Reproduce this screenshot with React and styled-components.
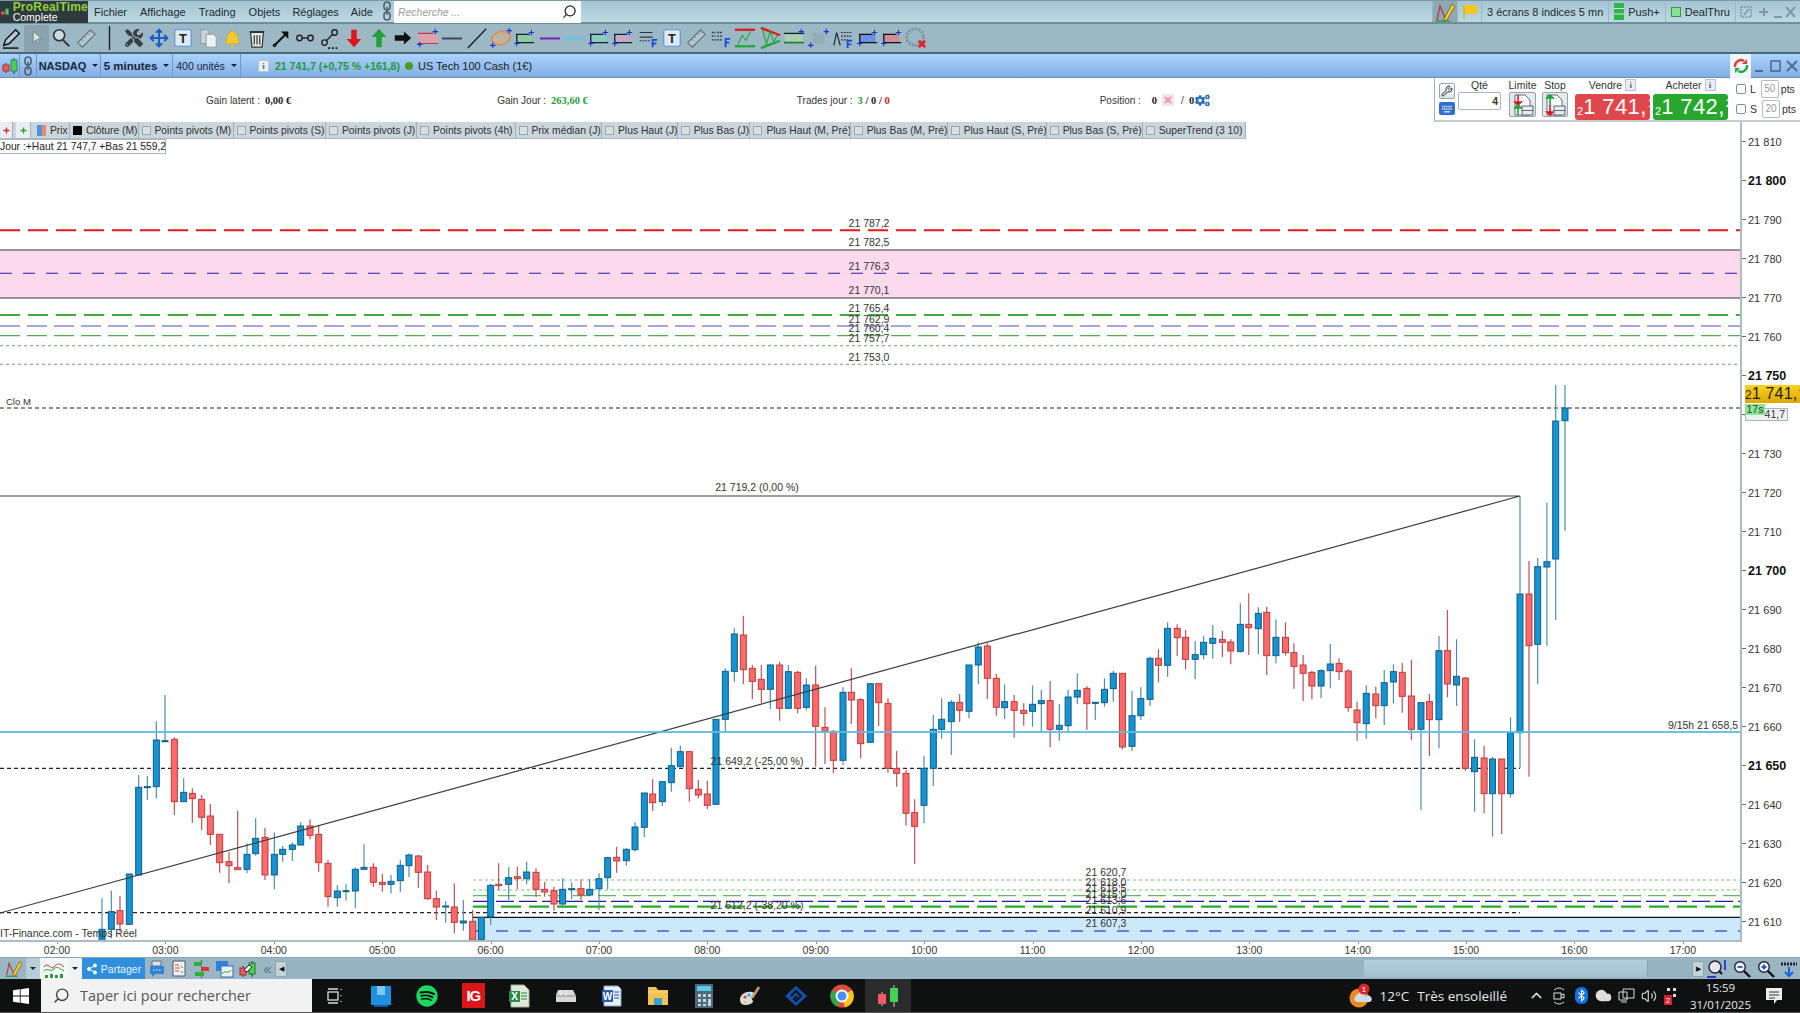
import React from 'react';
import styled, { createGlobalStyle } from 'styled-components';
import { FaTools, FaBell, FaSpotify, FaCogs, FaPlus } from 'react-icons/fa';
import { Move, Search, Wrench, ChevronUp, Bluetooth, Cloud, Volume2, Share2 } from 'lucide-react';

// candles as read off the picture: [x, wickTop, bodyTop, bodyBottom, wickBottom, up?]
// each block is read at its own scale and turned into page coordinates
const toPage = (ox, sx, oy, sy, rows) =>
  rows.map(([x, a, b, c, d, up]) => ({
    x: ox + x / sx,
    wt: oy + a / sy,
    bt: oy + b / sy,
    bb: oy + c / sy,
    wb: oy + d / sy,
    up: !!up,
  }));

const CANDLES = [
  ...toPage(0, 3, 680, 3, [
    [306, 655, 748, 800, 800, 1], [334, 632, 695, 748, 775, 1], [360, 648, 692, 732, 755, 0],
    [388, 582, 582, 733, 735, 1], [416, 285, 322, 585, 585, 1], [442, 288, 320, 323, 360, 1],
    [469, 124, 180, 320, 355, 1], [495, 45, 182, 184, 187, 1], [523, 172, 178, 365, 405, 0],
    [551, 295, 337, 365, 365, 1], [577, 325, 340, 356, 428, 0], [605, 345, 358, 412, 450, 0],
    [631, 372, 408, 463, 495, 0], [659, 463, 463, 548, 578, 0], [687, 515, 545, 557, 610, 0],
    [713, 392, 563, 569, 570, 0], [741, 490, 523, 568, 580, 1], [767, 415, 475, 521, 527, 1],
    [795, 443, 472, 585, 600, 0], [823, 457, 523, 585, 628, 1], [848, 497, 508, 523, 545, 1],
    [877, 487, 495, 508, 543, 1], [902, 427, 438, 495, 495, 1], [930, 418, 438, 466, 478, 0],
    [956, 437, 463, 548, 575, 0], [984, 540, 550, 650, 680, 0], [1012, 615, 633, 653, 680, 1],
    [1038, 613, 632, 633, 662, 1], [1066, 562, 568, 633, 685, 1], [1092, 493, 562, 568, 570, 1],
    [1120, 550, 562, 607, 620, 0], [1147, 582, 607, 613, 635, 0], [1173, 585, 604, 613, 640, 1],
    [1201, 540, 556, 602, 637, 1], [1227, 520, 525, 557, 592, 1], [1255, 525, 528, 577, 623, 0],
    [1283, 555, 576, 656, 660, 0], [1309, 632, 656, 681, 720, 0], [1337, 663, 678, 681, 728, 1],
    [1363, 610, 681, 727, 760, 0], [1390, 660, 723, 729, 752, 1], [1418, 690, 724, 780, 785, 0],
    [1444, 712, 712, 778, 785, 1], [1472, 612, 616, 710, 735, 1],
  ]),
  ...toPage(500, 3, 600, 3, [
    [-4, 790, 853, 857, 870, 0], [26, 802, 833, 853, 900, 1], [52, 800, 830, 836, 868, 0],
    [80, 785, 816, 836, 853, 1], [108, 805, 817, 868, 890, 0], [134, 845, 868, 876, 890, 0],
    [162, 860, 872, 912, 932, 0], [188, 835, 868, 912, 922, 1], [215, 847, 866, 868, 897, 1],
    [243, 838, 866, 885, 900, 0], [269, 837, 868, 885, 885, 1], [297, 820, 836, 866, 930, 1],
    [323, 770, 773, 833, 868, 1], [350, 740, 772, 783, 818, 0], [379, 745, 748, 782, 797, 1],
    [405, 667, 681, 749, 755, 1], [433, 579, 579, 682, 712, 1], [458, 538, 582, 608, 633, 0],
    [487, 545, 545, 605, 617, 1], [514, 443, 497, 548, 575, 1], [541, 437, 455, 500, 500, 1],
    [568, 453, 455, 566, 605, 0], [595, 540, 568, 585, 595, 0], [622, 542, 582, 616, 628, 0],
    [648, 358, 358, 613, 613, 1], [676, 205, 214, 358, 395, 1], [703, 85, 102, 214, 245, 1],
    [730, 47, 105, 209, 252, 0], [757, 195, 205, 244, 298, 0], [784, 195, 238, 268, 310, 0],
    [811, 192, 195, 268, 327, 1], [839, 185, 195, 325, 362, 0], [865, 195, 215, 325, 325, 1],
    [893, 212, 217, 325, 340, 0], [919, 235, 255, 322, 330, 1], [947, 197, 255, 379, 500, 0],
    [975, 322, 382, 394, 492, 0], [1000, 390, 394, 481, 520, 0], [1029, 262, 277, 481, 495, 1],
    [1054, 205, 277, 300, 372, 0], [1082, 295, 299, 431, 475, 0], [1111, 250, 251, 427, 427, 1],
    [1136, 248, 251, 308, 378, 0], [1164, 295, 310, 505, 518, 0], [1190, 452, 506, 520, 560, 0],
    [1218, 510, 520, 640, 677, 0], [1244, 598, 638, 679, 792, 0], [1272, 468, 505, 616, 670, 1],
    [1300, 345, 388, 505, 558, 1], [1325, 295, 358, 388, 416, 1], [1354, 300, 307, 365, 465, 1],
    [1379, 282, 307, 331, 365, 0], [1407, 195, 195, 334, 355, 1], [1435, 127, 141, 195, 253, 1],
    [1462, 130, 138, 235, 298, 0], [1489, 222, 235, 322, 347, 0],
  ]),
  ...toPage(1000, 2.613, 580, 3, [
    [12, 313, 365, 383, 417, 1], [37, 345, 365, 391, 473, 0], [62, 370, 391, 400, 437, 0],
    [85, 316, 373, 394, 440, 1], [108, 330, 362, 371, 455, 1], [131, 303, 362, 448, 502, 0],
    [155, 372, 436, 448, 482, 1], [178, 330, 351, 437, 455, 1], [202, 280, 331, 351, 372, 1],
    [227, 318, 325, 371, 450, 0], [249, 368, 367, 370, 420, 1], [273, 295, 328, 368, 380, 1],
    [296, 272, 280, 326, 365, 1], [320, 280, 280, 501, 508, 0], [345, 333, 407, 499, 513, 1],
    [368, 322, 356, 407, 420, 1], [392, 230, 235, 358, 378, 1], [414, 208, 235, 256, 307, 0],
    [438, 127, 145, 256, 290, 1], [463, 133, 145, 173, 228, 0], [485, 150, 172, 238, 268, 0],
    [510, 183, 224, 238, 298, 1], [532, 168, 187, 224, 238, 1], [556, 135, 175, 190, 236, 1],
    [581, 153, 179, 187, 231, 0], [603, 178, 186, 213, 253, 0], [628, 70, 133, 214, 218, 1],
    [650, 40, 133, 143, 225, 0], [675, 82, 100, 146, 222, 1], [697, 80, 97, 227, 285, 0],
    [721, 118, 172, 227, 250, 1], [746, 127, 172, 218, 227, 0], [768, 190, 218, 259, 326, 0],
    [792, 225, 255, 280, 363, 0], [815, 272, 277, 318, 358, 0], [839, 268, 272, 318, 355, 1],
    [863, 192, 252, 272, 325, 1], [886, 235, 250, 275, 300, 0], [910, 268, 273, 383, 395, 0],
    [933, 365, 390, 428, 482, 0], [957, 316, 340, 431, 476, 1], [982, 320, 342, 377, 415, 0],
    [1004, 270, 308, 377, 435, 1], [1028, 253, 275, 306, 370, 1], [1051, 248, 277, 349, 398, 0],
    [1075, 240, 348, 448, 480, 0], [1100, 368, 368, 448, 690, 1], [1122, 342, 365, 419, 528, 0],
    [1147, 168, 212, 419, 505, 1], [1169, 90, 212, 312, 352, 0], [1193, 178, 289, 315, 378, 1],
    [1216, 292, 294, 565, 572, 0], [1240, 478, 532, 575, 695, 1], [1265, 497, 534, 641, 700, 0],
    [1287, 530, 537, 641, 770, 1], [1311, 537, 537, 641, 762, 0], [1334, 412, 458, 641, 652, 1],
  ]),
  { x: 1520, wt: 496, bt: 594, bb: 732.7, wb: 768, up: true },
  { x: 1529, wt: 561, bt: 594, bb: 645.7, wb: 776.7, up: false },
  { x: 1537.7, wt: 558, bt: 566.7, bb: 644.3, wb: 684.3, up: true },
  { x: 1546.9, wt: 502.7, bt: 561.7, bb: 567, wb: 645.7, up: true },
  { x: 1555.7, wt: 385, bt: 421, bb: 559, wb: 620, up: true },
  { x: 1565, wt: 385, bt: 408, bb: 420.7, wb: 530.7, up: true },
];

const LEVELS = [
  { y: 230.3, from: 0, to: 1742, color: '#e8171f', w: 2, dash: '20 8' },
  { y: 273.3, from: 0, to: 1742, color: '#2020a8', w: 1.1, dash: '12 11' },
  { y: 315, from: 0, to: 1742, color: '#3eaa3e', w: 2, dash: '20 8' },
  { y: 326, from: 0, to: 1742, color: '#4c4cb4', w: 1.2, dash: '20 7' },
  { y: 335.7, from: 0, to: 1742, color: '#58a858', w: 1.2, dash: '20 7' },
  { y: 345.7, from: 0, to: 1742, color: '#86b886', w: 1.2, dash: '3 3' },
  { y: 364.3, from: 0, to: 1742, color: '#86b886', w: 1.2, dash: '3 3' },
  { y: 408, from: 0, to: 1742, color: '#222', w: 1.2, dash: '4 3' },
  { y: 768.3, from: 0, to: 1520, color: '#222', w: 1.2, dash: '4 3' },
  { y: 912.7, from: 0, to: 1520, color: '#222', w: 1.2, dash: '4 3' },
  { y: 880, from: 473, to: 1742, color: '#78bd78', w: 1.1, dash: '3 3' },
  { y: 890, from: 473, to: 1742, color: '#78bd78', w: 1.1, dash: '3 3' },
  { y: 895.7, from: 473, to: 1742, color: '#62b562', w: 1.2, dash: '18 7' },
  { y: 901.3, from: 473, to: 1742, color: '#1c1ca6', w: 1.2, dash: '18 5' },
  { y: 906.7, from: 473, to: 1742, color: '#28aa28', w: 2.2, dash: '20 8' },
  { y: 931, from: 473, to: 1742, color: '#1414a8', w: 1.1, dash: '12 11' },
];

const NOTES = [
  [869, 223, '21 787,2'], [869, 242, '21 782,5'], [869, 265.7, '21 776,3'], [869, 290, '21 770,1'],
  [869, 308, '21 765,4'], [869, 319, '21 762,9'], [869, 328, '21 760,4'], [869, 338, '21 757,7'],
  [869, 357, '21 753,0'], [757, 487, '21 719,2 (0,00 %)'], [757, 761, '21 649,2 (-25,00 %)'],
  [757, 905, '21 612,2 (-38,20 %)'], [1106, 872, '21 620,7'], [1106, 882, '21 618,0'],
  [1106, 888, '21 616,5'], [1106, 894, '21 615,0'], [1106, 900, '21 613,6'], [1106, 910, '21 610,9'],
  [1106, 923, '21 607,3'],
];

const LEGEND = [
  ['Points pivots (M)', 95], ['Points pivots (S)', 92.5], ['Points pivots (J)', 91], ['Points pivots (4h)', 98.5],
  ['Prix médian (J)', 86.5], ['Plus Haut (J)', 75.7], ['Plus Bas (J)', 72.7], ['Plus Haut (M, Pré)', 100.3],
  ['Plus Bas (M, Pré)', 97], ['Plus Haut (S, Pré)', 99], ['Plus Bas (S, Pré)', 96], ['SuperTrend (3 10)', 103.4],
];

const PRICES = Array.from({ length: 21 }, (_, i) => 21810 - i * 10);
const HOURS = ['02:00', '03:00', '04:00', '05:00', '06:00', '07:00', '08:00', '09:00', '10:00', '11:00', '12:00', '13:00', '14:00', '15:00', '16:00', '17:00'];

const GlobalStyle = createGlobalStyle`
  * { box-sizing: border-box; }
  html, body { margin: 0; padding: 0; overflow: hidden; background: #fff; }
  body { font-family: "Liberation Sans", Arial, sans-serif; color: #222; }
`;

const Page = styled.div`
  width: 1800px;
  height: 1013px;
  display: flex;
  flex-direction: column;
  overflow: hidden;
`;

const MenuBar = styled.div`
  height: 24px;
  display: flex;
  align-items: center;
  background: linear-gradient(#a4c5d3, #bdd8e2);
  border-top: 1px solid #7b9aa8;
  border-bottom: 2px solid #6f8e9b;
  font-size: 11px;
`;

const Logo = styled.div`
  width: 88px;
  height: 22px;
  display: flex;
  align-items: center;
  gap: 3px;
  background: #2f3a3d;
  color: #fff;
  line-height: 10px;
`;

const LogoText = styled.div`
  font-size: 10.5px;
  b {
    display: block;
    color: #8fcf3a;
    font-size: 12px;
    letter-spacing: 0.2px;
  }
`;

const MenuItem = styled.span`
  margin-left: ${(p) => p.$gap}px;
  color: #1e2a30;
`;

const SearchBox = styled.div`
  width: 187px;
  height: 22px;
  margin-left: 1px;
  padding: 0 4px;
  display: flex;
  align-items: center;
  justify-content: space-between;
  background: #fff;
  font-style: italic;
  font-size: 10.5px;
  color: #9a9a9a;
`;

const MenuRight = styled.div`
  margin-left: auto;
  height: 100%;
  display: flex;
  align-items: center;
`;

const RightCell = styled.div`
  height: 100%;
  padding: ${(p) => p.$pad || '0 5px'};
  display: flex;
  align-items: center;
  gap: 4px;
  border-left: 1px solid #9db8c4;
  background: ${(p) => p.$dark ? '#8fa9b4' : 'transparent'};
  color: #1e2a30;
`;

const ToolBar = styled.div`
  height: 30px;
  display: flex;
  align-items: center;
  background: #9cb8c5;
  border-bottom: 2px solid #47697c;
`;

const ToolSlot = styled.div`
  width: 24.45px;
  height: 27px;
  flex: none;
  display: flex;
  align-items: center;
  justify-content: center;
  background: ${(p) => p.$active ? '#8aa3ae' : 'transparent'};
  border-radius: 2px;
`;

const SymbolBar = styled.div`
  height: 24px;
  display: flex;
  align-items: center;
  background: linear-gradient(#abd2fc, #83aee2);
  border-bottom: 1px solid #6c8fb8;
  font-size: 11px;
`;

const SymbolCell = styled.div`
  height: 100%;
  width: ${(p) => p.$w}px;
  flex: none;
  display: flex;
  align-items: center;
  justify-content: center;
  gap: 6px;
  border-right: 1px solid #6f97c8;
  font-weight: ${(p) => p.$bold ? 700 : 400};
  font-size: ${(p) => p.$size || 11}px;
  color: #17263a;
`;

const Caret = styled.i`
  width: 0;
  height: 0;
  border: 3px solid transparent;
  border-top: 3.5px solid #17263a;
  border-bottom: 0;
`;

const InfoSquare = styled.span`
  width: 11px;
  height: 12px;
  margin-left: 6px;
  background: #e9eef3;
  border: 1px solid #b7c2cc;
  font: 700 9px "Liberation Serif", serif;
  color: #667;
  display: flex;
  align-items: center;
  justify-content: center;
`;

const Quote = styled.span`
  margin-left: 6px;
  color: #1e9b3c;
  font-weight: 700;
  font-size: 10.5px;
`;

const GreenDot = styled.i`
  width: 8px;
  height: 8px;
  margin: 0 5px;
  border-radius: 50%;
  background: #4a9e24;
`;

const WindowButtons = styled.div`
  margin-left: auto;
  height: 100%;
  display: flex;
  align-items: center;
`;

const RefreshTab = styled.div`
  width: 21px;
  height: 24px;
  background: #eef5fd;
  display: flex;
  align-items: center;
  justify-content: center;
`;

const InfoBar = styled.div`
  height: 44px;
  display: flex;
  background: #fff;
  font-size: 10px;
  color: #333;
`;

const Stats = styled.div`
  flex: 1;
  display: flex;
  align-items: center;
`;

const Stat = styled.div`
  margin-left: ${(p) => p.$gap}px;
  display: flex;
  align-items: center;
  gap: 5px;
  white-space: nowrap;
`;

const Figure = styled.b`
  font: 700 10.5px "Liberation Serif", serif;
  color: ${(p) => p.$color || '#222'};
`;

const OrderPanel = styled.div`
  width: 366px;
  flex: none;
  display: flex;
  padding-left: 4px;
  border-left: 1px solid #9fb0bb;
  border-bottom: 2px solid #c3cdd3;
  font-size: 10.5px;
`;

const ToolsColumn = styled.div`
  width: 16px;
  padding-top: 5px;
  display: flex;
  flex-direction: column;
  gap: 3px;
`;

const SquareBtn = styled.div`
  width: 16px;
  height: 16px;
  border: 1px solid #99a5ad;
  border-radius: 2px;
  background: linear-gradient(#fff, #dde3e7);
  display: flex;
  align-items: center;
  justify-content: center;
`;

const KeyPad = styled.div`
  width: 16px;
  height: 13px;
  border-radius: 2px;
  background: #2f6fd0;
  display: flex;
  align-items: center;
  justify-content: center;
`;

const OrderColumn = styled.div`
  width: ${(p) => p.$w}px;
  margin-left: ${(p) => p.$gap}px;
  flex: none;
  display: flex;
  flex-direction: column;
  align-items: center;
  text-align: center;
`;

const OrderLabel = styled.div`
  height: 14px;
  display: flex;
  align-items: center;
  gap: 3px;
  color: #333;
  white-space: nowrap;
`;

const QtyInput = styled.div`
  width: 100%;
  height: 18px;
  border: 1px solid #a9b4bb;
  border-radius: 2px;
  padding-right: 2px;
  text-align: right;
  line-height: 16px;
  font-weight: 700;
  font-size: 10.5px;
`;

const PageBtn = styled.div`
  width: 100%;
  height: 25px;
  border: 1px solid #98a4ab;
  border-radius: 2px;
  background: #e4e9ec;
  display: flex;
  align-items: center;
  justify-content: center;
`;

const PriceBtn = styled.div`
  width: 75px;
  height: 26px;
  margin-top: 2px;
  padding-left: 2px;
  border-radius: 3px;
  background: ${(p) => p.$color};
  color: #fff;
  display: flex;
  align-items: center;
  font-size: 22px;
  white-space: nowrap;
  overflow: hidden;
  letter-spacing: 0.4px;
`;

const Small = styled.small`
  font-size: ${(p) => p.$size || 11}px;
  align-self: ${(p) => p.$top ? 'flex-start' : 'flex-end'};
  margin: ${(p) => p.$top ? '3px 0 0 1px' : '0 0 3px 0'};
  letter-spacing: 0;
`;

const RiskColumn = styled.div`
  width: 62px;
  margin-left: 6px;
  display: flex;
  flex-direction: column;
  gap: 2px;
  padding-top: 2px;
`;

const RiskRow = styled.div`
  display: flex;
  align-items: center;
  height: 18px;
  font-size: 10.5px;
`;

const CheckBox = styled.span`
  width: 10px;
  height: 10px;
  margin-left: 2px;
  margin-right: 4px;
  border: 1px solid #7f8d96;
  border-radius: 2px;
  background: #fff;
`;

const PtsInput = styled.span`
  width: 18px;
  height: 18px;
  margin: 0 2px 0 5px;
  border: 1px solid #b3bcc2;
  border-radius: 2px;
  color: #999;
  font-size: 10px;
  text-align: center;
  line-height: 16px;
`;

const ChartRow = styled.div`
  height: 820px;
  display: flex;
`;

const Plot = styled.div`
  width: 1742px;
  position: relative;
  border-right: 2px solid #aebcc4;
  border-bottom: 2px solid #aebcc4;
  overflow: hidden;
`;

const ChartSvg = styled.svg`
  display: block;
`;

const Note = styled.text`
  font: 10.5px "Liberation Sans", Arial, sans-serif;
  fill: #333;
  text-anchor: ${(p) => p.$anchor || 'middle'};
  dominant-baseline: central;
`;

const LegendBar = styled.div`
  position: absolute;
  left: 0;
  top: 0;
  height: 17px;
  display: flex;
  background: #cad5dc;
  font-size: 10.3px;
  color: #333;
  border-bottom: 1px solid #aab8c0;
`;

const LegendCell = styled.div`
  width: ${(p) => p.$w}px;
  flex: none;
  display: flex;
  align-items: center;
  gap: 4px;
  padding-left: 3px;
  border-right: 1px solid #9fb0ba;
  white-space: nowrap;
  overflow: hidden;
`;

const LegendCheck = styled.i`
  width: 9px;
  height: 9px;
  flex: none;
  background: ${(p) => p.$fill || '#d9e0e4'};
  border: 1px solid ${(p) => p.$fill ? p.$fill : '#9aa8b0'};
`;

const MiniBtn = styled.div`
  width: ${(p) => p.$w}px;
  flex: none;
  display: flex;
  align-items: center;
  justify-content: center;
  background: #e8edf0;
  border-right: 1px solid #9fb0ba;
  margin-right: ${(p) => p.$gap || 0}px;
`;

const DayRange = styled.div`
  position: absolute;
  left: 0;
  top: 17px;
  width: 166px;
  height: 15px;
  background: #fff;
  border: 1px solid #a9b7bf;
  border-left: 0;
  font-size: 10.3px;
  line-height: 13px;
  white-space: nowrap;
  color: #222;
`;

const Watermark = styled.div`
  position: absolute;
  left: 0;
  bottom: 0;
  font-size: 10.5px;
  line-height: 13px;
  color: #333;
`;

const PriceAxis = styled.div`
  width: 58px;
  position: relative;
  display: flex;
  flex-direction: column;
  overflow: hidden;
`;

const PriceTick = styled.div`
  height: 39px;
  flex: none;
  display: flex;
  align-items: center;
  gap: 2px;
  font-size: ${(p) => p.$major ? 12.5 : 11}px;
  font-weight: ${(p) => p.$major ? 700 : 400};
  color: ${(p) => p.$major ? '#111' : '#333'};
  &::before {
    content: '';
    width: 4px;
    height: 1px;
    background: #667;
  }
`;

const LastPrice = styled.div`
  position: absolute;
  left: 3px;
  right: 0;
  top: 263px;
  height: 18px;
  display: flex;
  align-items: center;
  overflow: hidden;
  background: linear-gradient(#f8d321, #dca700);
  font-size: 16px;
  color: #222;
  white-space: nowrap;
  letter-spacing: 0.2px;
`;

const CloseBox = styled.div`
  position: absolute;
  left: 3px;
  top: 286px;
  width: 43px;
  height: 13px;
  padding-right: 2px;
  text-align: right;
  background: #edf1f4;
  border: 1px solid #a9b4bb;
  font-size: 10.5px;
  line-height: 11px;
  color: #333;
`;

const Countdown = styled.div`
  position: absolute;
  left: 3px;
  top: 282px;
  width: 20px;
  height: 11px;
  background: #8fe28f;
  font-size: 10.5px;
  line-height: 11px;
  text-align: center;
  color: #245;
`;

const TimeAxis = styled.div`
  height: 15px;
  display: flex;
  padding-left: 2.8px;
  background: #fff;
  font-size: 10.5px;
  color: #333;
`;

const TimeTick = styled.div`
  width: 108.4px;
  flex: none;
  text-align: center;
  line-height: 17px;
  position: relative;
  &::before {
    content: '';
    position: absolute;
    left: 50%;
    top: 0;
    width: 1px;
    height: 2px;
    background: #889;
  }
`;

const BottomBar = styled.div`
  height: 22px;
  display: flex;
  align-items: center;
  background: #9ab6c4;
  border-top: 1px solid #8ba7b4;
`;

const BottomCell = styled.div`
  width: ${(p) => p.$w}px;
  height: 100%;
  flex: none;
  display: flex;
  align-items: center;
  justify-content: center;
  background: ${(p) => p.$bg || 'transparent'};
`;

const ShareBtn = styled.div`
  width: 63px;
  height: 100%;
  flex: none;
  display: flex;
  align-items: center;
  justify-content: center;
  gap: 3px;
  background: #2f8fdc;
  color: #e8f4ff;
  font-size: 10.5px;
`;

const ScrollEnd = styled.div`
  width: 12px;
  height: 16px;
  flex: none;
  background: #c4d3da;
  border: 1px solid #8ca4b0;
  border-radius: 2px;
  display: flex;
  align-items: center;
  justify-content: center;
  font-size: 7px;
  color: #111;
`;

const ScrollTrack = styled.div`
  flex: 1;
  height: 17px;
  padding-left: 1077px;
  background: #96b3c1;
`;

const ScrollThumb = styled.div`
  width: 284px;
  height: 100%;
  background: linear-gradient(#b3d0dc, #a3c2d0);
  border-right: 1px solid #87a4b2;
`;

const TaskBar = styled.div`
  height: 34px;
  display: flex;
  align-items: center;
  background: #0f1111;
  border-bottom: 1px solid #555;
  color: #e8e8e8;
`;

const StartBtn = styled.div`
  width: 41px;
  height: 100%;
  display: flex;
  align-items: center;
  justify-content: center;
`;

const TaskSearch = styled.div`
  width: 271px;
  height: 100%;
  padding-left: 12px;
  display: flex;
  align-items: center;
  gap: 10px;
  background: #f2f2f2;
  color: #555;
  font: 14.5px "Open Sans", sans-serif;
`;

const TaskIcons = styled.div`
  margin-left: 0;
  display: flex;
  align-items: center;
  height: 100%;
`;

const TaskIcon = styled.div`
  width: 46.1px;
  height: 100%;
  flex: none;
  display: flex;
  align-items: center;
  justify-content: center;
  background: ${(p) => p.$active ? '#2a2c2c' : 'transparent'};
`;

const IgBadge = styled.div`
  width: 23px;
  height: 25px;
  background: #d8161c;
  color: #fff;
  font: 700 15px "Liberation Sans", sans-serif;
  display: flex;
  align-items: center;
  justify-content: center;
  letter-spacing: -1px;
`;

const Tray = styled.div`
  margin-left: auto;
  height: 100%;
  display: flex;
  align-items: center;
  font: 13.5px "Open Sans", sans-serif;
`;

const TrayText = styled.span`
  margin-left: ${(p) => p.$gap}px;
  white-space: nowrap;
`;

const TrayIcon = styled.span`
  width: 22.5px;
  flex: none;
  display: flex;
  justify-content: center;
`;

const Clock = styled.div`
  width: 64px;
  margin-left: 6px;
  text-align: center;
  font-size: 11.5px;
  line-height: 17px;
`;

const Plus = ({ x, y, c = '#1636d4' }) => <path d={`M${x - 3} ${y}h6M${x} ${y - 3}v6`} stroke={c} fill="none" strokeWidth="1.2" />;

const Ico = ({ size = 22, children }) => (
  <svg width={size} height={size} viewBox="0 0 24 24" fill="none">{children}</svg>
);

const boxTool = (fill, stroke = '#123') => (
  <Ico>
    <rect x="3" y="8" width="17" height="9" fill={fill} />
    <path d="M2 8h15M2 17h20M3 8v9" stroke={stroke} strokeWidth="1.4" />
    <Plus x={19} y={6} /><Plus x={3} y={18} />
  </Ico>
);

const fibTool = (
  <Ico>
    <path d="M3 6h14M3 11h14" stroke="#334" strokeWidth="1.2" />
    <path d="M3 15h12" stroke="#334" strokeWidth="1.2" strokeDasharray="2 1" />
    <path d="M17 22v-8h5M17 18h4" stroke="#1650d8" strokeWidth="2" />
  </Ico>
);

const textTool = (
  <Ico>
    <rect x="3" y="3" width="18" height="18" rx="2" fill="#dde9f4" stroke="#5e93d8" strokeWidth="1.3" />
    <text x="12" y="17" textAnchor="middle" fontSize="14" fontWeight="700" fontFamily="Liberation Sans" fill="#222">T</text>
  </Ico>
);

const rulerTool = (
  <Ico>
    <path d="M3 17 17 3l5 5L8 22z" fill="#b3c7d0" stroke="#5b6c74" strokeWidth="1.1" />
    <path d="M7 13l2 2M10 10l2 2M13 7l2 2M16 4.5l2 2" stroke="#5b6c74" />
  </Ico>
);

const TOOLS = [
  <Ico key="pencil"><path d="M3 20 5 14 16 3l4 4L9 18z" fill="#b9ccd4" stroke="#111" strokeWidth="1.6" /><path d="M2 23h17" stroke="#111" strokeWidth="1.6" /></Ico>,
  <Ico key="cursor" size={18}><path d="M7 3v15l4-4 3 6 2-1-3-6h5z" fill="#dfe6ea" stroke="#66757d" /></Ico>,
  <Ico key="lens"><circle cx="10" cy="9" r="6" stroke="#333" strokeWidth="1.7" fill="#c9dae2" /><path d="m14 14 7 7" stroke="#333" strokeWidth="2" /></Ico>,
  rulerTool,
  <svg key="sep" width="3" height="24"><path d="M1.5 0v24" stroke="#222" strokeWidth="1.4" /></svg>,
  <FaTools key="tools" size={18} color="#3a3f44" />,
  <Move key="move" size={20} color="#1b5fc6" strokeWidth={2.4} />,
  textTool,
  <Ico key="copy"><path d="M4 3h9v15H4z" fill="#c6d3d9" stroke="#8e9aa0" /><path d="M10 8h8l3 3v11H10z" fill="#eef2f4" stroke="#8e9aa0" /></Ico>,
  <FaBell key="bell" size={17} color="#f2c92a" style={{ filter: 'drop-shadow(0 0 0.5px #555)' }} />,
  <Ico key="trash"><path d="M5 6h14l-1.5 16h-11z" fill="#e5e8ea" stroke="#333" strokeWidth="1.3" /><path d="M4 5h16M9 9v10M12 9v10M15 9v10" stroke="#333" strokeWidth="1.3" /></Ico>,
  <Ico key="arrow"><path d="M5 20 18 7" stroke="#111" strokeWidth="2.2" /><path d="M12 5h8v8z" fill="#111" /><circle cx="5" cy="20" r="2" fill="#111" /></Ico>,
  <Ico key="dots"><circle cx="6" cy="12" r="3" stroke="#222" strokeWidth="1.5" /><circle cx="18" cy="12" r="3" stroke="#222" strokeWidth="1.5" /><path d="M9 12h6" stroke="#222" strokeWidth="1.5" /></Ico>,
  <Ico key="dots2"><circle cx="6" cy="17" r="3" stroke="#222" strokeWidth="1.5" /><circle cx="17" cy="6" r="3" stroke="#222" strokeWidth="1.5" /><path d="M8 15 15 8" stroke="#222" strokeWidth="1.5" /><path d="M10 23h12" stroke="#111" strokeWidth="2" strokeDasharray="2 2" /></Ico>,
  <Ico key="down"><path d="M9 3h6v10h5l-8 9-8-9h5z" fill="#e0141c" /></Ico>,
  <Ico key="up"><path d="M12 2l8 9h-5v11H9V11H4z" fill="#22a03a" /></Ico>,
  <Ico key="right"><path d="M3 9h10V5l8 7-8 7v-4H3z" fill="#111" /></Ico>,
  <Ico key="band"><rect x="1" y="7" width="22" height="11" fill="#d7a3ad" /><path d="M1 7h17M1 18h22" stroke="#c23a4a" strokeWidth="1.2" /><Plus x={20} y={5} /><Plus x={3} y={19} /></Ico>,
  <svg key="gray" width="24" height="3"><path d="M2 1.5h20" stroke="#445" strokeWidth="2" /></svg>,
  <Ico key="diag"><path d="M2 23 22 2" stroke="#223" strokeWidth="1.6" /></Ico>,
  <Ico key="ellipse"><ellipse cx="12" cy="12" rx="10" ry="7" transform="rotate(-15 12 12)" fill="#c2b39e" stroke="#d98c5a" strokeWidth="1.8" /><Plus x={21} y={4} /><Plus x={3} y={20} /></Ico>,
  boxTool('#8fc9a0'),
  <svg key="purple" width="24" height="3"><path d="M2 1.5h20" stroke="#7a1fb0" strokeWidth="2" /></svg>,
  <svg key="cyan" width="24" height="3"><path d="M2 1.5h20" stroke="#54c8ee" strokeWidth="2" /></svg>,
  boxTool('#8ccbc0'),
  boxTool('#c2a9c4'),
  fibTool,
  textTool,
  rulerTool,
  <Ico key="fibtext"><path d="M2 6h4M8 6h5M2 10h4M8 10h5M2 14h11" stroke="#334" strokeWidth="1.4" strokeDasharray="2 1" /><path d="M17 22v-9h5M17 17h4" stroke="#1650d8" strokeWidth="2" /></Ico>,
  <Ico key="zig"><path d="M1 3h22" stroke="#d42020" strokeWidth="2.5" /><path d="M1 21h22" stroke="#20a83a" strokeWidth="2.5" /><path d="M4 19 9 9l4 6 5-10" stroke="#20a83a" strokeWidth="1.2" /></Ico>,
  <Ico key="tri"><path d="M2 1 23 9" stroke="#d42020" strokeWidth="2.6" /><path d="M2 23 23 15" stroke="#20a83a" strokeWidth="2.6" /><path d="M4 3 8 19 12 5 16 16 20 9" stroke="#20a83a" strokeWidth="1.2" /></Ico>,
  <Ico key="green"><rect x="2" y="8" width="20" height="9" fill="#a8cfae" /><path d="M1 7h22" stroke="#123" strokeWidth="1.4" /><path d="M1 17h22" stroke="#17802d" strokeWidth="1.8" /><Plus x={20} y={5} /></Ico>,
  <Ico key="fade"><rect x="5" y="7" width="13" height="11" fill="#93acb8" /><Plus x={20} y={5} /><Plus x={3} y={20} /></Ico>,
  <Ico key="fibfan"><path d="M5 6 2 20M5 6l4 14" stroke="#123" strokeWidth="1.2" /><path d="M10 6h11M10 10h11M10 14h7" stroke="#334" strokeWidth="1.3" strokeDasharray="2 1" /><path d="M17 23v-8h5M17 19h4" stroke="#1650d8" strokeWidth="2" /></Ico>,
  boxTool('#6f8fe0', '#111'),
  boxTool('#cc8f98', '#111'),
  <Ico key="gear"><circle cx="11" cy="11" r="9" stroke="#7f959f" strokeWidth="3.4" strokeDasharray="2.4 1.4" /><path d="M15 15l7 7M22 15l-7 7" stroke="#e0242c" strokeWidth="3" /></Ico>,
];

const CandleMark = ({ size = 18 }) => (
  <svg width={size} height={size} viewBox="0 0 18 18">
    <path d="M5 6v10M13 1v16" stroke="#333" />
    <rect x="2" y="8" width="6" height="6" fill="#ef5a5a" stroke="#a33" />
    <rect x="10" y="3" width="6" height="11" fill="#4ed04e" stroke="#287" />
  </svg>
);

const ChainMark = () => (
  <svg width="12" height="20" viewBox="0 0 12 20" fill="none" stroke="#50626c" strokeWidth="1.6">
    <rect x="3" y="1" width="6" height="8" rx="3" />
    <rect x="3" y="11" width="6" height="8" rx="3" />
    <path d="M6 6v8" />
  </svg>
);

const MarkerMark = ({ size = 22 }) => (
  <svg width={size} height={size} viewBox="0 0 22 22" fill="none">
    <path d="M2 20h14" stroke="#2aa03a" strokeWidth="1.4" />
    <path d="M3 19 6 5l5 12" stroke="#b33" strokeWidth="1.2" />
    <path d="M10 18 18 3l3 2-8 14-3 1z" fill="#f2cb3a" stroke="#6c5a16" strokeWidth="0.8" />
  </svg>
);

const OrderIcon = ({ flip }) => (
  <svg width="22" height="22" viewBox="0 0 22 22">
    <path d="M3 1h10l5 5v15H3z" fill="#fff" stroke="#667" />
    <path d="M6 1v7H3l3 3 0 0 3-3H6" fill={flip ? '#1aa538' : '#e0141c'} transform={flip ? 'rotate(180 6 6)' : ''} stroke={flip ? '#1aa538' : '#e0141c'} strokeWidth="1.6" />
    <path d="M6 21v-7H3l3-3 3 3H6" fill={flip ? '#e0141c' : '#1aa538'} transform={flip ? 'rotate(180 6 16)' : ''} stroke={flip ? '#e0141c' : '#1aa538'} strokeWidth="1.6" />
    <rect x="10" y="12" width="11" height="4.5" fill="#e6ebee" stroke="#667" />
    <rect x="10" y="16.5" width="11" height="4.5" fill="#e6ebee" stroke="#667" />
  </svg>
);

const LensMark = ({ sign }) => (
  <svg width="18" height="18" viewBox="0 0 18 18" fill="none">
    <circle cx="7" cy="7" r="5.3" fill="#eef3f6" stroke="#223" strokeWidth="1.4" />
    <path d="m11 11 6 6" stroke="#111" strokeWidth="2.4" />
    {sign !== 'full' && <path d="M4.5 7h5" stroke="#1d50c8" strokeWidth="1.8" />}
    {sign === '+' && <path d="M7 4.5v5" stroke="#1d50c8" strokeWidth="1.8" />}
  </svg>
);

const Chart = () => (
  <ChartSvg width="1740" height="818" viewBox="0 122 1740 818">
    <rect x="0" y="250" width="1740" height="48" fill="#fdd9ee" />
    <path d="M0 250h1740M0 298h1740" stroke="#777" strokeWidth="1.4" />
    <rect x="473" y="917" width="1267" height="24" fill="#cbe9fb" />
    <path d="M473 917.3h1267" stroke="#111" strokeWidth="1.3" />

    {LEVELS.map((l) => (
      <line key={l.y} x1={l.from} x2={l.to} y1={l.y} y2={l.y} stroke={l.color} strokeWidth={l.w} strokeDasharray={l.dash} />
    ))}

    {CANDLES.map((c) => (
      <g key={c.x}>
        <line x1={c.x} x2={c.x} y1={c.wt} y2={c.wb} stroke={c.up ? '#4e8ea9' : '#b8545a'} strokeWidth="1.2" />
        <rect
          x={c.x - 3}
          y={c.bt}
          width="6"
          height={Math.max(c.bb - c.bt, 1)}
          fill={c.up ? '#1593d2' : '#fa6a6a'}
          stroke={c.up ? '#0f5f88' : '#bd3c3c'}
          strokeWidth="1"
        />
      </g>
    ))}

    <path d="M0 913 1520 496H0" stroke="#3c3c3c" strokeWidth="1.2" fill="none" />
    <line x1="0" x2="1740" y1="732" y2="732" stroke="#5cbce4" strokeWidth="2.2" opacity="0.9" />

    {NOTES.map(([x, y, t]) => (
      <Note key={t} x={x} y={y}>{t}</Note>
    ))}
    <Note x="6" y="401.5" $anchor="start" style={{ fontSize: 9.5 }}>Clo M</Note>
    <Note x="1738" y="724.6" $anchor="end">9/15h 21 658,5</Note>
  </ChartSvg>
);

const App = () => (
  <Page>
    <GlobalStyle />

    <MenuBar>
      <Logo>
        <CandleMark />
        <LogoText><b>ProRealTime</b>Complete</LogoText>
      </Logo>
      <MenuItem $gap={6}>Fichier</MenuItem>
      <MenuItem $gap={13}>Affichage</MenuItem>
      <MenuItem $gap={13}>Trading</MenuItem>
      <MenuItem $gap={13}>Objets</MenuItem>
      <MenuItem $gap={12}>Réglages</MenuItem>
      <MenuItem $gap={12}>Aide</MenuItem>
      <MenuItem $gap={8}><ChainMark /></MenuItem>
      <SearchBox>
        Recherche ...
        <Search size={15} color="#222" style={{ transform: 'scaleX(-1)' }} />
      </SearchBox>
      <MenuRight>
        <RightCell $dark $pad="0 1px"><MarkerMark /></RightCell>
        <RightCell $pad="0 3px">
          <svg width="17" height="17" viewBox="0 0 17 17"><path d="M3 2h13v9H3z" fill="#f6c81e" /><path d="M3 2v14" stroke="#d8a80c" /></svg>
        </RightCell>
        <RightCell>3 écrans 8 indices 5 mn</RightCell>
        <RightCell>
          <svg width="10" height="17"><rect width="10" height="17" fill="#2fb54a" /><path d="M0 5.5h10M0 11h10" stroke="#c8ead0" /></svg>
          Push+
        </RightCell>
        <RightCell>
          <svg width="10" height="10"><rect x=".5" y=".5" width="9" height="9" fill="#8ade95" stroke="#2f9b44" /></svg>
          DealThru
        </RightCell>
        <RightCell $pad="0 4px">
          <svg width="56" height="16" viewBox="0 0 56 16" fill="none" stroke="#8198a4" strokeWidth="1.6">
            <rect x="1" y="3" width="10" height="10" strokeDasharray="2 1" />
            <path d="M4 11 9 5" />
            <path d="M19 8h9M24 4v8" strokeWidth="2" />
            <path d="M34 13h8" strokeWidth="2" />
            <path d="M46 3l9 10M55 3l-9 10" strokeWidth="2" />
          </svg>
        </RightCell>
      </MenuRight>
    </MenuBar>

    <ToolBar>
      {TOOLS.map((tool, i) => (
        <ToolSlot key={i} $active={i === 1}>{tool}</ToolSlot>
      ))}
    </ToolBar>

    <SymbolBar>
      <SymbolCell $w={20}><CandleMark /></SymbolCell>
      <SymbolCell $w={17}><ChainMark /></SymbolCell>
      <SymbolCell $w={64} $bold>NASDAQ <Caret /></SymbolCell>
      <SymbolCell $w={72} $bold $size={11.5}>5 minutes <Caret /></SymbolCell>
      <SymbolCell $w={68} $size={10.5}>400 unités <Caret /></SymbolCell>
      <InfoSquare style={{ marginLeft: 69 - 52 }}>i</InfoSquare>
      <Quote>21 741,7 (+0,75 % +161,8)</Quote>
      <GreenDot />
      <span>US Tech 100 Cash (1€)</span>
      <WindowButtons>
        <RefreshTab>
          <svg width="18" height="18" viewBox="0 0 18 18" fill="none" strokeWidth="2.4">
            <path d="M3 10a6 6 0 0 1 9-6" stroke="#e23b3b" /><path d="M15 2v5h-5z" fill="#e23b3b" />
            <path d="M15 8a6 6 0 0 1-9 6" stroke="#2aa83f" /><path d="M3 16v-5h5z" fill="#2aa83f" />
          </svg>
        </RefreshTab>
        <svg width="49" height="16" viewBox="0 0 49 16" fill="none" stroke="#4d6f90" strokeWidth="1.6">
          <path d="M4 13h8" strokeWidth="2" />
          <rect x="20" y="3" width="9" height="10" />
          <path d="M36 3l10 10M46 3 36 13" strokeWidth="2" />
        </svg>
      </WindowButtons>
    </SymbolBar>

    <InfoBar>
      <Stats>
        <Stat $gap={206}>Gain latent : <Figure>0,00 €</Figure></Stat>
        <Stat $gap={206}>Gain Jour : <Figure $color="#2a9c3a">263,60 €</Figure></Stat>
        <Stat $gap={209}>Trades jour : <Figure><span style={{ color: '#2a9c3a' }}>3</span> / 0 / <span style={{ color: '#c22' }}>0</span></Figure></Stat>
        <Stat $gap={210}>
          Position : <Figure style={{ marginLeft: 6 }}>0</Figure>
          <svg width="12" height="12"><rect width="12" height="12" fill="#f1e6e8" /><path d="M3 3l6 6M9 3l-6 6" stroke="#ef9aa0" strokeWidth="2" /></svg>
          <span style={{ marginLeft: 2 }}>/</span> <Figure>0</Figure>
          <FaCogs size={15} color="#2a6fb8" style={{ marginLeft: -4 }} />
        </Stat>
      </Stats>
      <OrderPanel>
        <ToolsColumn>
          <SquareBtn><Wrench size={12} color="#222" /></SquareBtn>
          <KeyPad>
            <svg width="12" height="8"><path d="M1 1.5h10M1 4h10" stroke="#dfe9fb" strokeWidth="1.5" strokeDasharray="1.4 .7" /><path d="M3 6.8h6" stroke="#dfe9fb" strokeWidth="1.3" /></svg>
          </KeyPad>
        </ToolsColumn>
        <OrderColumn $w={43} $gap={3}>
          <OrderLabel>Qté</OrderLabel>
          <QtyInput>4</QtyInput>
        </OrderColumn>
        <OrderColumn $w={27} $gap={8}>
          <OrderLabel>Limite</OrderLabel>
          <PageBtn><OrderIcon /></PageBtn>
        </OrderColumn>
        <OrderColumn $w={26} $gap={6}>
          <OrderLabel>Stop</OrderLabel>
          <PageBtn><OrderIcon flip /></PageBtn>
        </OrderColumn>
        <OrderColumn $w={75} $gap={7}>
          <OrderLabel>Vendre <InfoSquare style={{ margin: 0 }}>i</InfoSquare></OrderLabel>
          <PriceBtn $color="#e0474c"><Small>2</Small>1 741,<Small $top>1</Small></PriceBtn>
        </OrderColumn>
        <OrderColumn $w={75} $gap={3}>
          <OrderLabel>Acheter <InfoSquare style={{ margin: 0 }}>i</InfoSquare></OrderLabel>
          <PriceBtn $color="#27a72e"><Small>2</Small>1 742,<Small $top>2</Small></PriceBtn>
        </OrderColumn>
        <RiskColumn>
          <RiskRow><CheckBox />L<PtsInput>50</PtsInput>pts</RiskRow>
          <RiskRow><CheckBox />S<PtsInput>20</PtsInput>pts</RiskRow>
        </RiskColumn>
      </OrderPanel>
    </InfoBar>

    <ChartRow>
      <Plot>
        <Chart />
        <LegendBar>
          <MiniBtn $w={13} $gap={3}><FaPlus size={7} color="#d9262c" /></MiniBtn>
          <MiniBtn $w={15} $gap={3}><FaPlus size={7} color="#22a23a" /></MiniBtn>
          <LegendCell $w={36}>
            <svg width="9" height="11"><rect width="5" height="11" fill="#4a93dd" /><rect x="5" width="4" height="11" fill="#f2866a" /></svg>
            Prix
          </LegendCell>
          <LegendCell $w={68.5}><LegendCheck $fill="#000" />Clôture (M)</LegendCell>
          {LEGEND.map(([label, w]) => (
            <LegendCell key={label} $w={w}><LegendCheck />{label}</LegendCell>
          ))}
        </LegendBar>
        <DayRange>Jour :+Haut 21 747,7 +Bas 21 559,2</DayRange>
        <Watermark>IT-Finance.com - Temps Réel</Watermark>
      </Plot>
      <PriceAxis>
        {PRICES.map((p) => (
          <PriceTick key={p} $major={p % 50 === 0}>{String(p).slice(0, 2)} {String(p).slice(2)}</PriceTick>
        ))}
        <LastPrice><Small $size={12} style={{ marginBottom: 1 }}>2</Small>1 741,<Small $size={11} $top>7</Small></LastPrice>
        <CloseBox>41,7</CloseBox>
        <Countdown>17s</Countdown>
      </PriceAxis>
    </ChartRow>

    <TimeAxis>
      {HOURS.map((h) => <TimeTick key={h}>{h}</TimeTick>)}
    </TimeAxis>

    <BottomBar>
      <BottomCell $w={26}><MarkerMark size={19} /></BottomCell>
      <BottomCell $w={14} $bg="#b9cdd7"><Caret /></BottomCell>
      <BottomCell $w={28} $bg="#f4f7f8">
        <svg width="22" height="20" viewBox="0 0 22 20" fill="none">
          <path d="M1 8c4-6 7 4 10 0s6-4 10 0" stroke="#d33" />
          <path d="M1 12c4-4 7 2 10-2s6 0 10 2" stroke="#2a2" />
          <path d="M2 19v-3h3v3h2v-4h3v4h2v-3h3v3h2v-4h3v4" fill="#2a9c3a" />
        </svg>
      </BottomCell>
      <BottomCell $w={14} $bg="#eef3f5"><Caret /></BottomCell>
      <ShareBtn><Share2 size={12} color="#fff" fill="#fff" />Partager</ShareBtn>
      <BottomCell $w={23}>
        <svg width="16" height="18" viewBox="0 0 16 18"><path d="M3 1h9v5H3z" fill="#d8e2ea" stroke="#667" /><path d="M1 6h14v8H6l-3 3v-3H1z" fill="#2f82d6" /><path d="M4 10h8" stroke="#fff" strokeDasharray="1.5 1.5" /></svg>
      </BottomCell>
      <BottomCell $w={22}>
        <svg width="14" height="17" viewBox="0 0 14 17"><path d="M1 1h12v15H1z" fill="#eef2f4" stroke="#556" /><path d="M3 5h4M3 8h5M3 11h4" stroke="#c44" /><path d="M9 6l2 2M9 11l2 2" stroke="#2a2" /></svg>
      </BottomCell>
      <BottomCell $w={23}>
        <svg width="17" height="18" viewBox="0 0 17 18"><path d="M8.5 0v18" stroke="#177" /><path d="M1 2h8v4H1z" fill="#2fae3c" /><path d="M8 7h8v4H8z" fill="#d33" /><path d="M2 12h9v4H2z" fill="#2fae3c" /></svg>
      </BottomCell>
      <BottomCell $w={23}>
        <svg width="19" height="18" viewBox="0 0 19 18"><rect x="1" y="1" width="12" height="10" fill="#2f82d6" /><rect x="6" y="6" width="12" height="11" fill="#eef2f4" stroke="#2f6fc6" /><path d="M7 14c3-5 5 1 9-4" stroke="#2a2" fill="none" /></svg>
      </BottomCell>
      <BottomCell $w={24}>
        <svg width="18" height="18" viewBox="0 0 18 18" fill="none"><path d="M13 1v16M4 6v11" stroke="#333" /><rect x="10" y="3" width="6" height="11" fill="#4ed04e" stroke="#272" /><rect x="1" y="8" width="6" height="7" fill="#ef5a5a" stroke="#933" /><path d="M5 10l5-5 3 2-5 5z" fill="#fff" stroke="#222" /></svg>
      </BottomCell>
      <BottomCell $w={15} style={{ color: '#57707c', fontSize: 15 }}>«</BottomCell>
      <ScrollEnd>◀</ScrollEnd>
      <ScrollTrack><ScrollThumb /></ScrollTrack>
      <ScrollEnd>▶</ScrollEnd>
      <BottomCell $w={26}>
        <svg width="22" height="20" viewBox="0 0 22 20" fill="none">
          <circle cx="9" cy="8" r="6" fill="#e4e8ea" stroke="#223" strokeWidth="1.4" /><path d="m13 12 3 3" stroke="#111" strokeWidth="2" />
          <path d="M19 1v10M1 18h9" stroke="#1d40d0" strokeWidth="1.8" />
        </svg>
      </BottomCell>
      <BottomCell $w={24}><LensMark sign="-" /></BottomCell>
      <BottomCell $w={24}><LensMark sign="+" /></BottomCell>
      <BottomCell $w={22}>
        <svg width="18" height="18" viewBox="0 0 18 18"><path d="M1 4h16" stroke="#223" strokeWidth="3" strokeDasharray="2 1" /><path d="M9 7v9M5 12l4 4 4-4" stroke="#1d60d8" strokeWidth="2" fill="none" /></svg>
      </BottomCell>
    </BottomBar>

    <TaskBar>
      <StartBtn>
        <svg width="16" height="16" viewBox="0 0 16 16" fill="#fff"><path d="M0 2.3 6.8 1.3v6.2H0zM7.6 1.2 16 0v7.5H7.6zM0 8.4h6.8v6.3L0 13.7zM7.6 8.4H16V16l-8.4-1.2z" /></svg>
      </StartBtn>
      <TaskSearch>
        <Search size={17} color="#444" style={{ transform: 'scaleX(-1)' }} />
        Taper ici pour rechercher
      </TaskSearch>
      <TaskIcons>
        <TaskIcon>
          <svg width="16" height="18" viewBox="0 0 16 18" fill="none" stroke="#ddd" strokeWidth="1.3"><rect x="1" y="5" width="10" height="8" /><path d="M1 2h10M1 16h10M14 2v1M14 8v1M14 14v1" /></svg>
        </TaskIcon>
        <TaskIcon>
          <svg width="22" height="24" viewBox="0 0 22 24"><path d="M1 2h20v19H1z" fill="#1f8fe0" /><path d="M7 2v9h8V2z" fill="#7ac8f5" /><path d="M4 21h14v2H4z" fill="#0b5ca8" /></svg>
        </TaskIcon>
        <TaskIcon><FaSpotify size={22} color="#1ed760" /></TaskIcon>
        <TaskIcon><IgBadge>IG</IgBadge></TaskIcon>
        <TaskIcon>
          <svg width="22" height="24" viewBox="0 0 22 24"><path d="M3 1h13l5 5v17H3z" fill="#dfe8da" stroke="#9fb39a" /><rect x="1" y="7" width="11" height="11" fill="#2c8a47" /><text x="6.5" y="16" textAnchor="middle" fontSize="10" fontWeight="700" fontFamily="Liberation Sans" fill="#fff">X</text><path d="M13 9h6M13 12h6M13 15h6" stroke="#6aa86f" strokeWidth="1.4" /></svg>
        </TaskIcon>
        <TaskIcon>
          <svg width="22" height="16" viewBox="0 0 22 16"><path d="M3 2h15l3 6v6H1V7z" fill="#d8d8d8" /><path d="M1 8h20" stroke="#8a8a8a" /><path d="M6 2v6M11 2v6" stroke="#f4f4f4" /></svg>
        </TaskIcon>
        <TaskIcon>
          <svg width="22" height="24" viewBox="0 0 22 24"><path d="M3 2h14l3 3v17H3z" fill="#e8eef8" stroke="#8ea4c8" /><rect x="1" y="6" width="11" height="12" fill="#2a5bb0" /><text x="6.5" y="15.5" textAnchor="middle" fontSize="10" fontWeight="700" fontFamily="Liberation Sans" fill="#fff">W</text><path d="M13 8h5M13 11h5M13 14h5" stroke="#5b86c8" strokeWidth="1.4" /></svg>
        </TaskIcon>
        <TaskIcon>
          <svg width="22" height="20" viewBox="0 0 22 20"><path d="M1 1h8l2 3h10v15H1z" fill="#f3c34f" /><path d="M1 6h20" stroke="#ffe08a" /><path d="M7 12h8v7H7z" fill="#3aa0dc" /></svg>
        </TaskIcon>
        <TaskIcon>
          <svg width="18" height="24" viewBox="0 0 18 24"><rect width="18" height="24" fill="#4d6a7c" /><rect x="2" y="2" width="14" height="5" fill="#5ec8e8" /><path d="M3 10h3v3H3zM8 10h3v3H8zM13 10h3v3h-3zM3 15h3v3H3zM8 15h3v3H8zM13 15h3v7h-3zM3 20h3v2H3zM8 20h3v2H8z" fill="#c9d3d9" /></svg>
        </TaskIcon>
        <TaskIcon>
          <svg width="24" height="24" viewBox="0 0 24 24"><path d="M2 16c0-6 6-9 12-8 4 1 3 4 1 5s-1 3 0 4-3 4-7 4-6-2-6-5z" fill="#d7dde0" /><circle cx="7" cy="13" r="1.6" fill="#e23b3b" /><circle cx="11" cy="11" r="1.6" fill="#2aa8e0" /><circle cx="7" cy="18" r="1.6" fill="#f2c92a" /><path d="M14 14 21 3" stroke="#c79a5e" strokeWidth="2.6" /></svg>
        </TaskIcon>
        <TaskIcon>
          <svg width="24" height="24" viewBox="0 0 24 24" fill="none"><path d="M12 2 23 12 12 22 1 12z" fill="#1352a8" /><path d="M7 12l5-5 5 5-5 5-2-2 3-3" stroke="#0f1111" strokeWidth="2" /></svg>
        </TaskIcon>
        <TaskIcon>
          <svg width="24" height="24" viewBox="0 0 24 24"><circle cx="12" cy="12" r="11.5" fill="#dd4b3d" /><path d="M12 12 22 6a11.5 11.5 0 0 1-7 17.5z" fill="#f5c518" /><path d="M12 12 7.5 22.7A11.5 11.5 0 0 1 2 6z" fill="#2fa44f" /><circle cx="12" cy="12" r="5.5" fill="#4a8af4" stroke="#fff" strokeWidth="2" /></svg>
        </TaskIcon>
        <TaskIcon $active>
          <svg width="24" height="24" viewBox="0 0 24 24"><path d="M6 8v14M18 1v22" stroke="#c9d0c9" /><rect x="2" y="10" width="8" height="10" fill="#ef5a66" /><rect x="14" y="4" width="8" height="14" fill="#44d052" /></svg>
        </TaskIcon>
      </TaskIcons>
      <Tray>
        <svg width="24" height="26" viewBox="0 0 24 26">
          <circle cx="10" cy="15" r="9.5" fill="#ec8a1c" />
          <path d="M7 19a4 4 0 0 1 1-7 5 5 0 0 1 9 1 3 3 0 0 1 4 6z" fill="#cfdde8" />
          <circle cx="15" cy="6" r="5.5" fill="#d8262c" />
          <text x="15" y="9" textAnchor="middle" fontSize="8" fontFamily="Liberation Sans" fill="#fff">1</text>
        </svg>
        <TrayText $gap={7}>12°C</TrayText>
        <TrayText $gap={8}>Très ensoleillé</TrayText>
        <TrayIcon style={{ marginLeft: 18 }}><ChevronUp size={17} color="#ddd" /></TrayIcon>
        <TrayIcon>
          <svg width="14" height="18" viewBox="0 0 14 18" fill="none" stroke="#ddd"><path d="M2 3a8 8 0 0 1 10 0M2 15a8 8 0 0 0 10 0" /><rect x="2" y="6" width="7" height="6" /><path d="M9 8l3-1v4l-3-1" /></svg>
        </TrayIcon>
        <TrayIcon>
          <span style={{ background: '#1270e8', borderRadius: 6, display: 'flex', padding: '2px 0' }}><Bluetooth size={13} color="#fff" /></span>
        </TrayIcon>
        <TrayIcon><Cloud size={17} color="#ddd" fill="#ddd" /></TrayIcon>
        <TrayIcon>
          <svg width="17" height="16" viewBox="0 0 17 16" fill="none" stroke="#ddd"><path d="M5 1h11v9H5zM1 4h8v8H1zM3 14h6" /></svg>
        </TrayIcon>
        <TrayIcon><Volume2 size={16} color="#bbb" /></TrayIcon>
        <TrayIcon>
          <svg width="14" height="18" viewBox="0 0 14 18"><rect x="0" y="8" width="8" height="10" fill="#d8202a" /><text x="4" y="16" textAnchor="middle" fontSize="8" fontFamily="Liberation Sans" fill="#fff">2</text><path d="M3 1h3v3H3zM9 1h3v3H9zM9 7h3v3H9z" fill="#ddd" /></svg>
        </TrayIcon>
        <Clock>15:59<br />31/01/2025</Clock>
        <TrayIcon style={{ marginLeft: 10, marginRight: 15 }}>
          <svg width="18" height="18" viewBox="0 0 18 18" fill="none"><path d="M1 1h16v12h-5l-3 4v-4H1z" fill="#eee" /><path d="M4 5h10M4 8h10M4 11h6" stroke="#333" /></svg>
        </TrayIcon>
      </Tray>
    </TaskBar>
  </Page>
);

export default App;
